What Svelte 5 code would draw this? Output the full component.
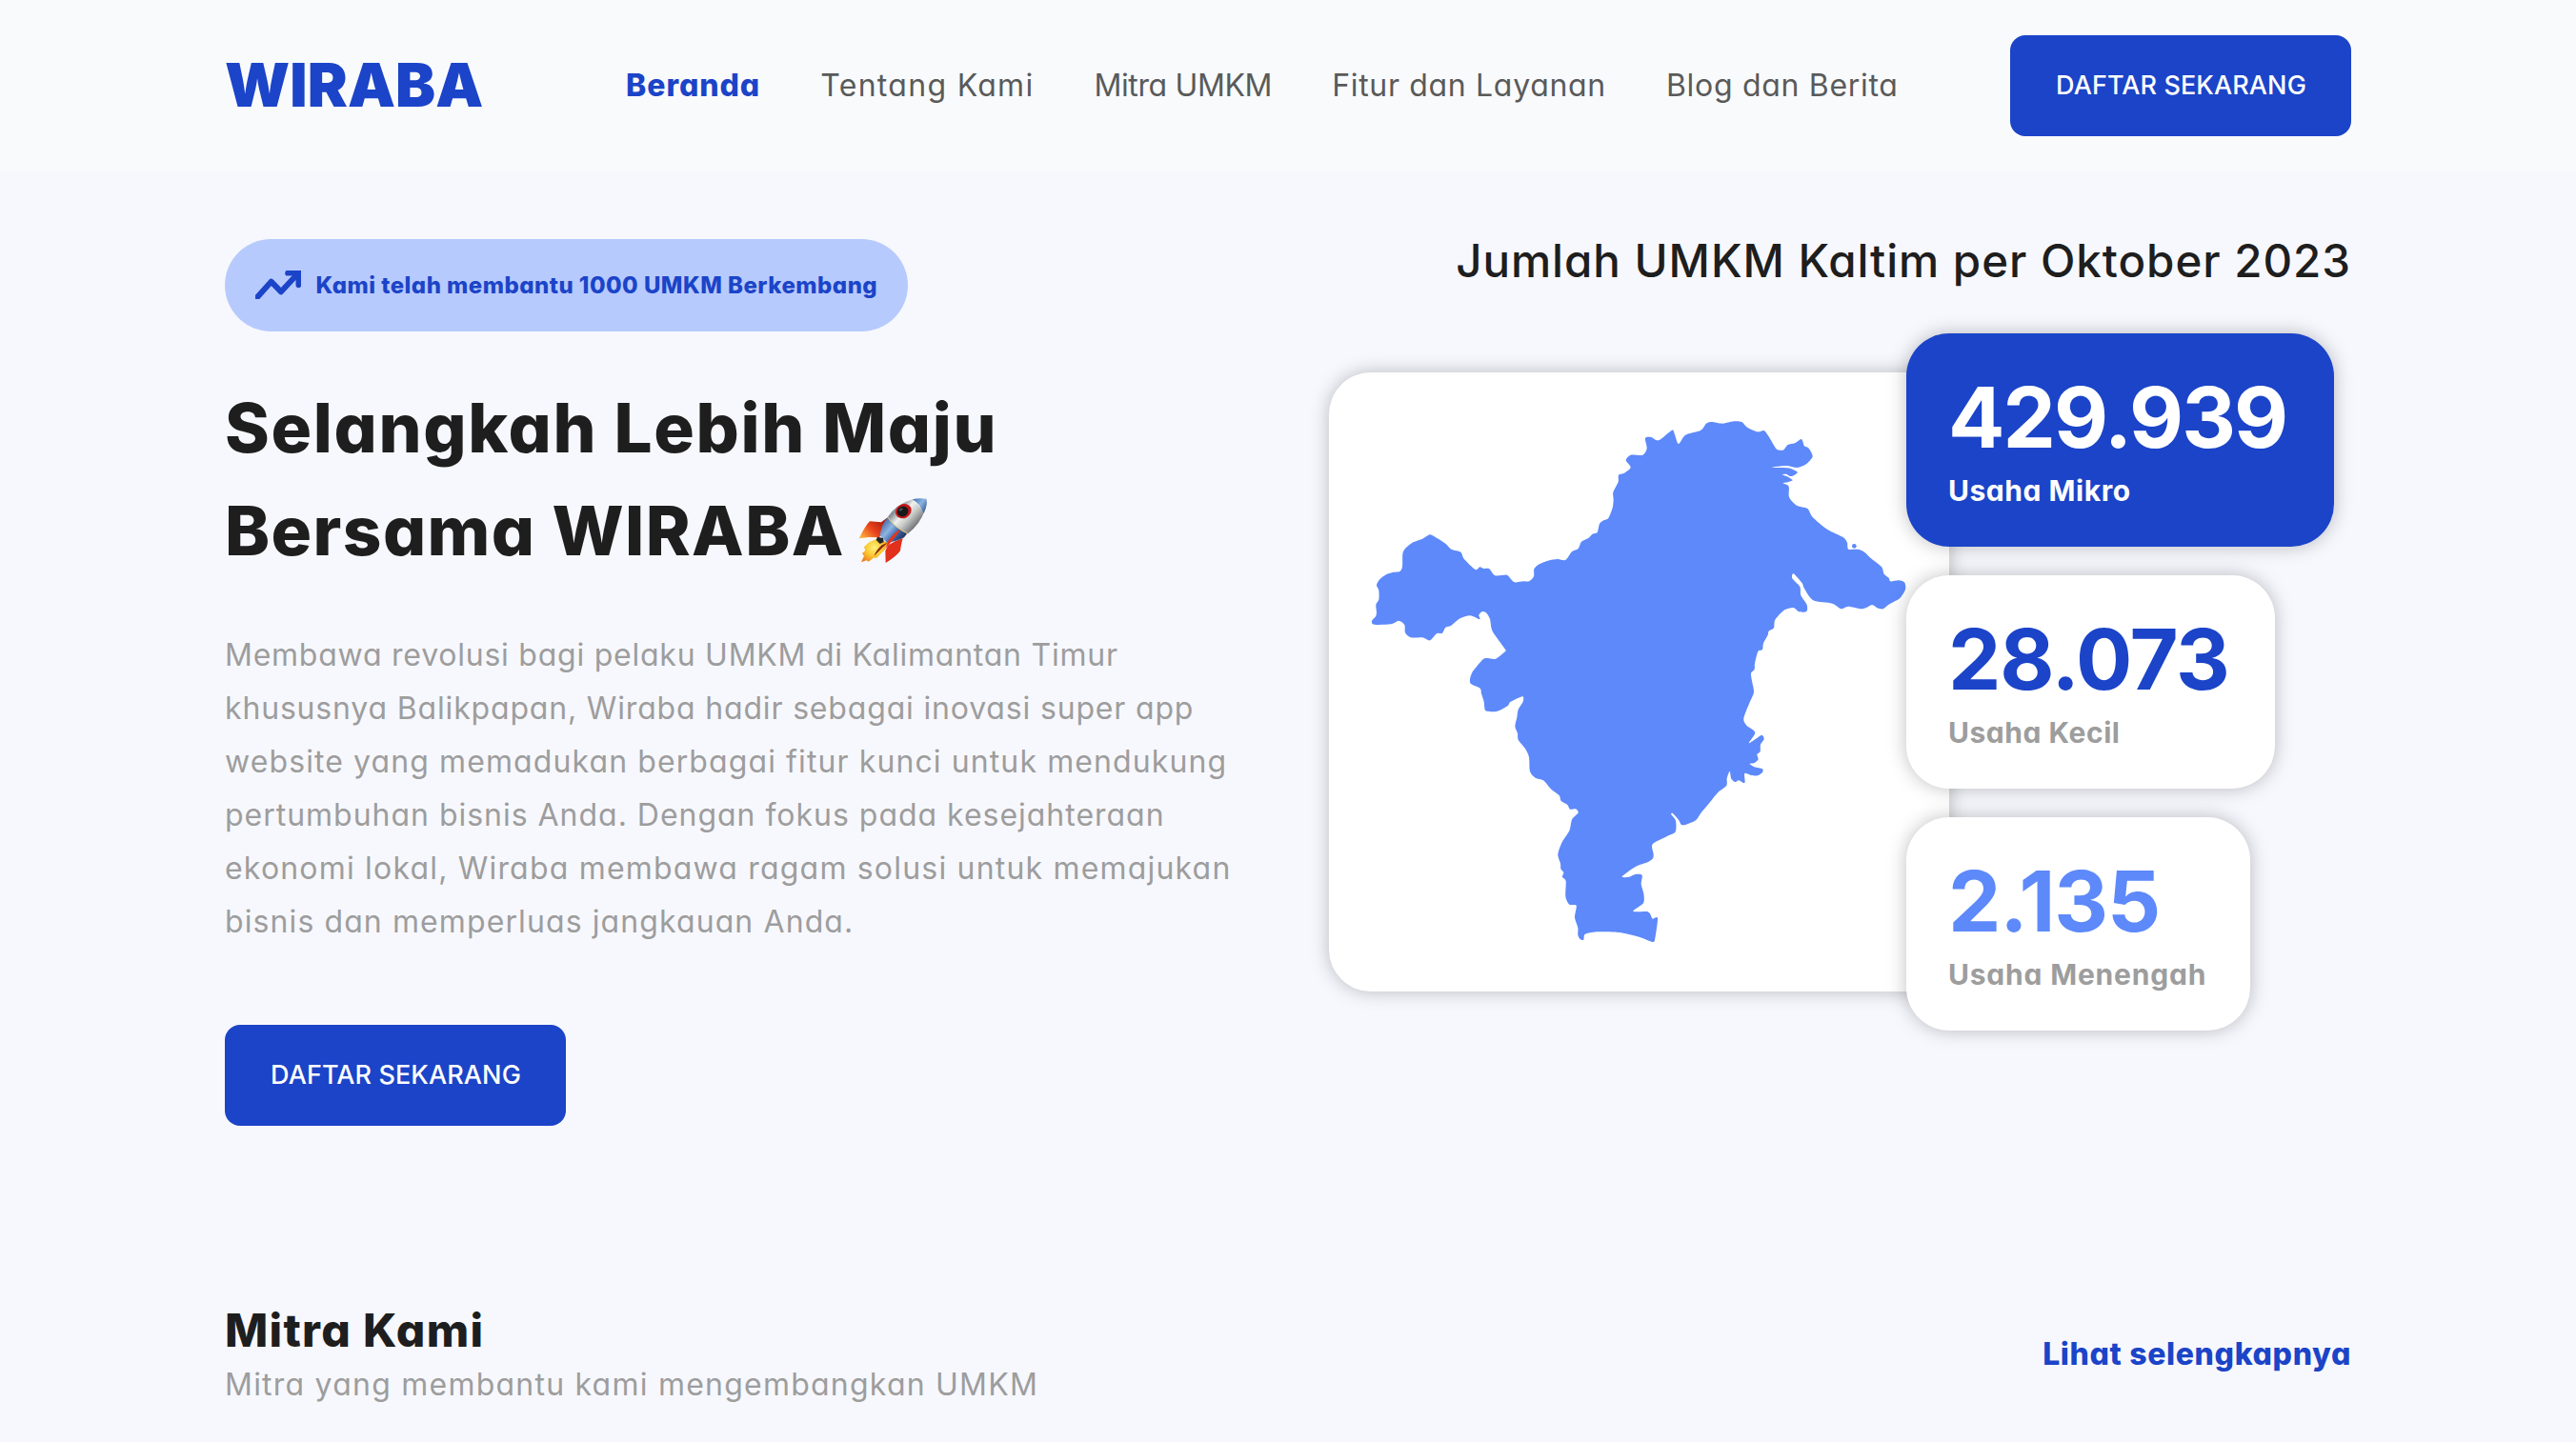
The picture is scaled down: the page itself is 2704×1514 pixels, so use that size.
<script>
  const links = ['Beranda', 'Tentang Kami', 'Mitra UMKM', 'Fitur dan Layanan', 'Blog dan Berita'];

  const stats = [
    { value: '429.939', label: 'Usaha Mikro', kind: 'micro' },
    { value: '28.073', label: 'Usaha Kecil', kind: 'small' },
    { value: '2.135', label: 'Usaha Menengah', kind: 'medium' }
  ];

  const intro = [
    'Membawa revolusi bagi pelaku UMKM di Kalimantan Timur',
    'khususnya Balikpapan, Wiraba hadir sebagai inovasi super app',
    'website yang memadukan berbagai fitur kunci untuk mendukung',
    'pertumbuhan bisnis Anda. Dengan fokus pada kesejahteraan',
    'ekonomi lokal, Wiraba membawa ragam solusi untuk memajukan',
    'bisnis dan memperluas jangkauan Anda.'
  ];

  // Outline of East Kalimantan, clockwise from its western tip.
  const outline =
    '180,816 192,802 195,790 193,765 202,748 202,720 195,703 205,685 225,670 245,663 268,660 276,645 277,605 285,588 310,568 340,557 362,544 375,549 412,572 430,590 460,599 470,620 506,654 520,646 532,651 550,652 568,673 605,671 618,684 630,694 658,691 675,691 690,676 691,652 705,638 735,626 765,621 790,624 810,598 830,588 840,566 862,555 875,542 890,537 897,510 910,499 925,492 938,460 941,435 940,410 956,378 957,356 975,350 995,332 980,310 995,293 1033,293 1046,272 1041,240 1060,237 1083,247 1125,215 1132,223 1143,256 1150,254 1168,230 1215,216 1233,194 1250,189 1285,194 1320,187 1345,189 1362,206 1395,220 1415,216 1430,235 1452,272 1465,278 1477,277 1490,261 1512,256 1533,243 1542,265 1556,272 1568,298 1548,322 1520,333 1485,327 1440,332 1490,334 1520,347 1505,359 1495,359 1485,353 1472,355 1492,363 1505,373 1490,379 1475,382 1493,392 1494,426 1518,452 1552,462 1568,489 1615,528 1665,553 1677,570 1681,590 1715,591 1735,602 1750,617 1785,645 1793,668 1808,680 1813,691 1840,688 1858,695 1860,717 1843,744 1810,763 1790,778 1770,774 1755,765 1725,778 1680,770 1658,778 1630,761 1570,751 1542,714 1535,697 1508,667 1504,682 1528,708 1531,735 1550,765 1549,786 1525,787 1508,774 1480,781 1450,812 1446,838 1430,848 1427,860 1413,886 1410,906 1396,912 1386,950 1385,968 1374,980 1377,1005 1383,1040 1370,1072 1351,1123 1360,1145 1387,1167 1367,1200 1385,1190 1408,1175 1415,1188 1404,1205 1403,1228 1393,1236 1397,1252 1385,1263 1370,1266 1385,1276 1410,1282 1410,1293 1395,1303 1375,1302 1354,1296 1355,1324 1348,1325 1335,1318 1325,1323 1312,1313 1307,1289 1298,1312 1297,1334 1270,1356 1240,1393 1217,1420 1200,1444 1170,1457 1155,1458 1146,1442 1127,1421 1123,1426 1137,1445 1136,1480 1110,1494 1064,1519 1067,1550 1065,1564 1050,1575 1010,1590 968,1621 990,1622 1010,1614 1031,1617 1028,1645 1036,1675 1035,1705 1003,1730 1045,1731 1056,1738 1064,1754 1080,1752 1072,1815 1065,1827 1030,1814 965,1798 895,1795 852,1802 847,1820 837,1819 829,1805 829,1782 819,1750 824,1712 802,1709 790,1684 791,1635 780,1622 784,1608 775,1597 774,1580 766,1552 778,1515 802,1477 810,1442 830,1420 822,1408 804,1409 796,1395 776,1383 770,1365 745,1346 720,1318 695,1310 678,1290 675,1245 663,1218 641,1190 639,1170 631,1148 637,1120 641,1095 656,1070 656,1054 635,1061 615,1072 608,1083 575,1100 539,1099 533,1070 525,1045 521,1028 490,1012 495,980 530,937 545,933 570,935 600,912 600,905 560,848 552,810 540,790 528,786 517,797 520,811 490,799 458,808 430,830 412,836 402,854 385,855 363,877 340,868 303,868 285,853 283,828 265,815 240,826 187,827';

  // Closed Catmull-Rom curve through the outline points.
  function smooth(source) {
    const p = source.split(' ').map((s) => s.split(',').map(Number));
    const n = p.length;
    const k = 0.13;
    let d = `M${p[0][0]} ${p[0][1]}`;
    for (let i = 0; i < n; i++) {
      const a = p[(i - 1 + n) % n];
      const b = p[i];
      const c = p[(i + 1) % n];
      const e = p[(i + 2) % n];
      const x1 = (b[0] + (c[0] - a[0]) * k).toFixed(1);
      const y1 = (b[1] + (c[1] - a[1]) * k).toFixed(1);
      const x2 = (c[0] - (e[0] - b[0]) * k).toFixed(1);
      const y2 = (c[1] - (e[1] - b[1]) * k).toFixed(1);
      d += `C${x1} ${y1} ${x2} ${y2} ${c[0]} ${c[1]}`;
    }
    return d + 'Z';
  }

  const region = smooth(outline);
</script>

<div class="page">
  <header class="header">
    <div class="logo">WIRABA</div>
    <nav class="nav">
      {#each links as link, i}
        <span class="link" class:active={i === 0}>{link}</span>
      {/each}
    </nav>
    <button class="cta">DAFTAR SEKARANG</button>
  </header>

  <main>
    <section class="hero">
      <div class="pitch">
        <div class="pill">
          <svg class="trend" viewBox="36 42 144 90" fill="none">
            <path d="M43 125L86 77L117 109L168 54" stroke-width="18" stroke-linecap="round" stroke-linejoin="round" />
            <path d="M138 50H172V88" stroke-width="17" stroke-linecap="round" />
            <path d="M152 50H172V74Z" stroke-width="4" class="tip" />
          </svg>
          <span>Kami telah membantu 1000 UMKM Berkembang</span>
        </div>

        <h1>
          <span class="line">Selangkah Lebih Maju</span>
          <span class="line second">
            Bersama WIRABA
            <svg class="rocket" viewBox="0 0 264 264">
              <defs>
                <linearGradient id="hull" x1="125" y1="75" x2="185" y2="130" gradientUnits="userSpaceOnUse">
                  <stop offset="0" stop-color="#8b9199" /><stop offset=".3" stop-color="#f1f1ee" /><stop offset=".6" stop-color="#c4c6c5" /><stop offset="1" stop-color="#6c6e72" />
                </linearGradient>
                <linearGradient id="band" x1="92" y1="105" x2="155" y2="160" gradientUnits="userSpaceOnUse">
                  <stop offset="0" stop-color="#4c6fa8" /><stop offset=".35" stop-color="#8fb4e2" /><stop offset=".65" stop-color="#3f69aa" /><stop offset="1" stop-color="#1d2f55" />
                </linearGradient>
                <linearGradient id="nose" x1="195" y1="30" x2="236" y2="60" gradientUnits="userSpaceOnUse">
                  <stop offset="0" stop-color="#4f7fbd" /><stop offset=".45" stop-color="#8db4e0" /><stop offset="1" stop-color="#2c5590" />
                </linearGradient>
                <linearGradient id="fin" x1="90" y1="95" x2="30" y2="155" gradientUnits="userSpaceOnUse">
                  <stop offset="0" stop-color="#b3200f" /><stop offset=".45" stop-color="#e8421d" /><stop offset="1" stop-color="#ffb93e" />
                </linearGradient>
                <radialGradient id="flame" cx="68" cy="180" r="52" gradientUnits="userSpaceOnUse">
                  <stop offset="0" stop-color="#fff27a" /><stop offset=".5" stop-color="#fbc832" /><stop offset="1" stop-color="#ee7a22" />
                </radialGradient>
              </defs>
              <path d="M110 85L90 100L54 97Q42 108 20 151L52 147L84 148L98 128Z" fill="url(#fin)" />
              <path d="M158 150Q152 172 150 190Q138 208 104 228L103 190L112 172L134 160Z" fill="#e2301d" />
              <path d="M76 152L52 163L36 178L40 188L30 198L36 206L27 226L44 220L50 224L66 212L76 212L90 198L102 186L112 164L98 160Z" fill="url(#flame)" />
              <path d="M110 164L90 184L68 206Q74 188 92 172Z" fill="#8a2a12" />
              <path d="M110 84Q90 108 86 142L108 164Q134 162 162 148L176 130L140 96Z" fill="url(#band)" />
              <path d="M110 84Q136 44 188 28L226 66Q212 106 174 136Q136 118 110 84Z" fill="url(#hull)" />
              <path d="M188 28Q208 22 232 26Q238 42 224 72Q212 42 188 28Z" fill="url(#nose)" />
              <path d="M110 84Q134 118 174 136" fill="none" stroke="#e9d27a" stroke-width="3" />
              <ellipse cx="160" cy="65" rx="26" ry="22" transform="rotate(-28 160 65)" fill="#c3181a" />
              <ellipse cx="158" cy="66" rx="18" ry="16" transform="rotate(-28 158 66)" fill="#17181a" />
              <ellipse cx="152" cy="60" rx="7" ry="4" transform="rotate(-35 152 60)" fill="#4a4d52" />
              <path d="M78 146L96 150L98 162L86 168L74 156Z" fill="#22262b" />
              <path d="M146 124Q128 136 112 158L104 182Q126 158 148 128Z" fill="#e8321f" />
            </svg>
          </span>
        </h1>

        <p class="intro">
          {#each intro as line}
            <span>{line}</span>
          {/each}
        </p>

        <button class="cta">DAFTAR SEKARANG</button>
      </div>

      <div class="figures">
        <h2>Jumlah UMKM Kaltim per Oktober 2023</h2>
        <div class="board">
          <div class="map">
            <svg viewBox="45 33 1953 1950">
              <path d={region} />
              <circle cx="1699" cy="580" r="7" />
            </svg>
          </div>
          <div class="stats">
            {#each stats as stat}
              <div class="stat {stat.kind}">
                <div class="value">{stat.value}</div>
                <div class="label">{stat.label}</div>
              </div>
            {/each}
          </div>
        </div>
      </div>
    </section>

    <section class="partners">
      <div>
        <h3>Mitra Kami</h3>
        <p>Mitra yang membantu kami mengembangkan UMKM</p>
      </div>
      <span class="more">Lihat selengkapnya</span>
    </section>
  </main>
</div>

<style>
  :global(body) {
    background: #f7f8fd;
  }

  .page {
    height: 1514px;
    overflow: hidden;
    box-sizing: border-box;
    background: #f7f8fd;
    color: #1e1e1e;
    font-family: Inter, 'Open Sans', sans-serif;
    font-feature-settings: 'cv11';
    white-space: nowrap;
  }

  h1, h2, h3, p {
    margin: 0;
  }

  .header {
    display: flex;
    align-items: center;
    height: 180px;
    padding: 0 236px;
    box-sizing: border-box;
    background: #f9fafc;
  }

  .logo {
    width: 272px;
    color: #1b44c8;
    font-size: 63px;
    font-weight: 900;
    letter-spacing: 0.1px;
    line-height: 96px;
    padding-bottom: 2px;
  }

  .nav {
    display: flex;
    gap: 63px;
    margin-left: 149px;
    color: #5a5a5a;
    font-size: 32px;
    line-height: 48px;
  }

  .link:nth-child(1) { letter-spacing: 0.95px; }
  .link:nth-child(2) { letter-spacing: 1.3px; }
  .link:nth-child(3) { letter-spacing: -0.37px; }
  .link:nth-child(4) { letter-spacing: 0.68px; }
  .link:nth-child(5) { letter-spacing: 0.7px; }

  .link.active {
    color: #1b44c8;
    font-weight: 800;
  }

  .cta {
    display: block;
    width: 358px;
    height: 106px;
    padding: 0 0 1px 1px;
    border: 0;
    border-radius: 16px;
    background: #1b44c8;
    color: #fff;
    font: 500 27px/42px Inter, 'Open Sans', sans-serif;
    letter-spacing: 0.1px;
  }

  .header .cta {
    margin-left: auto;
  }

  .hero {
    display: flex;
    justify-content: space-between;
    padding: 58px 236px 0;
  }

  .pitch {
    padding-top: 13px;
  }

  .pill {
    display: flex;
    align-items: center;
    gap: 15.5px;
    width: 717px;
    height: 97px;
    padding: 0 0 1px 32px;
    box-sizing: border-box;
    border-radius: 49px;
    background: #b7cafd;
    color: #1b44c8;
    font-size: 24px;
    font-weight: 800;
    letter-spacing: 0.48px;
  }

  .trend {
    width: 48px;
    height: 30px;
    stroke: #1b44c8;
  }

  .tip {
    fill: #1b44c8;
  }

  h1 {
    margin-top: 47px;
    font-size: 71px;
    font-weight: 800;
    line-height: 108px;
  }

  .line {
    display: block;
    letter-spacing: 1.66px;
  }

  .line.second {
    display: flex;
    align-items: center;
    justify-content: space-between;
    width: 747px;
    letter-spacing: 1.4px;
  }

  .rocket {
    width: 88px;
    height: 88px;
    margin-top: 3px;
  }

  .intro {
    margin-top: 49px;
    color: #9d9d9d;
    font-size: 32px;
    line-height: 56px;
  }

  .intro span {
    display: block;
  }

  .intro span:nth-child(1) { letter-spacing: 0.76px; }
  .intro span:nth-child(2) { letter-spacing: 0.83px; }
  .intro span:nth-child(3) { letter-spacing: 1.1px; }
  .intro span:nth-child(4) { letter-spacing: 0.98px; }
  .intro span:nth-child(5) { letter-spacing: 1.19px; }
  .intro span:nth-child(6) { letter-spacing: 1.1px; }

  .pitch .cta {
    margin-top: 80px;
  }

  .figures {
    width: 1073px;
  }

  h2 {
    font-size: 47.5px;
    font-weight: 500;
    line-height: 72px;
    letter-spacing: 0.95px;
    text-align: right;
  }

  .board {
    display: flex;
    align-items: center;
    margin-top: 40px;
  }

  .map {
    width: 651px;
    height: 650px;
    border-radius: 44px;
    background: #fff;
    box-shadow: 0 0 20px rgba(0, 0, 0, 0.25);
  }

  .map svg {
    display: block;
    width: 651px;
    height: 650px;
    fill: #5d89fa;
  }

  .stats {
    display: flex;
    flex-direction: column;
    align-items: flex-start;
    gap: 30px;
    margin-left: -45px;
  }

  .stat {
    height: 224px;
    padding: 38px 44px 0;
    box-sizing: border-box;
    border-radius: 45px;
    background: #fff;
    box-shadow: 0 0 20px rgba(0, 0, 0, 0.25);
    color: #9d9d9d;
    position: relative;
  }

  .value {
    font-size: 88px;
    font-weight: 700;
    line-height: 100px;
  }

  .label {
    margin-top: 5px;
    font-size: 30px;
    font-weight: 700;
    line-height: 44px;
    letter-spacing: 0.54px;
  }

  .micro {
    width: 449px;
    background: #1b44c8;
    color: #fff;
  }

  .micro .value {
    letter-spacing: -1.96px;
  }

  .small {
    width: 387px;
  }

  .small .value {
    color: #1b44c8;
    letter-spacing: -1.2px;
  }

  .medium {
    width: 361px;
  }

  .medium .value {
    color: #5d89fa;
    letter-spacing: -1.16px;
  }

  .medium .label {
    letter-spacing: 0.8px;
  }

  .partners {
    display: flex;
    align-items: center;
    justify-content: space-between;
    margin-top: 182px;
    padding: 0 236px;
  }

  h3 {
    font-size: 48px;
    font-weight: 800;
    line-height: 66px;
    letter-spacing: 1.3px;
  }

  .partners p {
    color: #9d9d9d;
    font-size: 32px;
    line-height: 48px;
    letter-spacing: 1.23px;
  }

  .more {
    color: #1b44c8;
    font-size: 32px;
    font-weight: 800;
    letter-spacing: 0.65px;
  }
</style>
